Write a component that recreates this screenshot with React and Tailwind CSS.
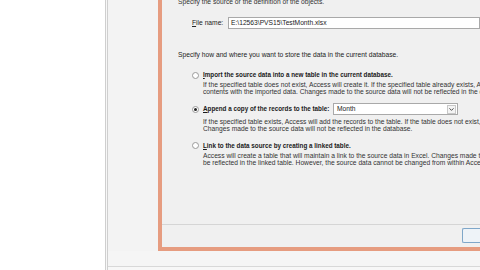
import { ChevronDown } from 'lucide-react';

function Radio({ checked }) {
  return (
    <span className="mt-[1px] flex h-[7px] w-[7px] shrink-0 items-center justify-center rounded-full border border-[#9a9a9a] bg-white">
      {checked ? <span className="h-[3px] w-[3px] rounded-full bg-[#222]" /> : null}
    </span>
  );
}

function Option({ checked, label, under, children, lines, descTop = 'mt-[2px]' }) {
  return (
    <div className="flex flex-col">
      <div className="flex h-[9px] items-center">
        <div className="flex w-[25px] justify-end pr-[4px]">
          <Radio checked={checked} />
        </div>
        <span className="w-[130px] shrink-0 whitespace-nowrap text-[6.3px] font-bold text-[#1a1a1a]">
          <span className="underline">{under}</span>
          {label}
        </span>
        {children}
      </div>
      <div className={`ml-[25px] ${descTop} flex flex-col leading-[7.2px] text-[#333]`}>
        {lines.map((l) => (
          <div key={l} className="whitespace-nowrap">
            {l}
          </div>
        ))}
      </div>
    </div>
  );
}

export default function App() {
  return (
    <div
      className="flex h-[270px] w-[480px] overflow-hidden bg-white text-[6.7px]"
      style={{ fontFamily: '"Liberation Sans", Arial, sans-serif' }}
    >
      <div className="w-[105px] shrink-0 bg-white" />
      <div className="w-[3px] shrink-0 border-x border-[#cfcfcf] bg-[#f7f7f7]" />
      <div className="flex min-w-0 flex-1 flex-col bg-[#f3f3f3]">
        <div className="flex h-[251px] shrink-0">
          <div className="w-[50px] shrink-0" />
          <div className="flex min-w-0 flex-1 flex-col border-b-4 border-l-4 border-[#e69c80] bg-[#f0f0f0]">
            <div className="flex h-[224px] shrink-0 flex-col overflow-hidden pl-[16px]">
              <div className="-mt-[3px] whitespace-nowrap text-[#333]">
                Specify the source or the definition of the objects.
              </div>
              <div className="mt-[10px] flex items-center">
                <span className="ml-[14px] w-[36px] whitespace-nowrap text-[#222]">
                  <span className="underline">F</span>ile name:
                </span>
                <div className="flex h-[12px] flex-1 items-center border border-[#a9a9a9] bg-white pl-[2px] text-[#222]">
                  E:\12563\PVS15\TestMonth.xlsx
                </div>
              </div>
              <div className="mt-[21px] whitespace-nowrap text-[#222]">
                Specify how and where you want to store the data in the current database.
              </div>
              <div className="mt-[10px] flex flex-col gap-[9px]">
                <Option
                  under="I"
                  label="mport the source data into a new table in the current database."
                  lines={[
                    'If the specified table does not exist, Access will create it. If the specified table already exists, Access might overwrite its',
                    'contents with the imported data. Changes made to the source data will not be reflected in the database.',
                  ]}
                />
                <Option
                  checked
                  under="A"
                  label="ppend a copy of the records to the table:"
                  descTop="mt-[4px]"
                  lines={[
                    'If the specified table exists, Access will add the records to the table. If the table does not exist, Access will create it.',
                    'Changes made to the source data will not be reflected in the database.',
                  ]}
                >
                  <div className="flex h-[12px] w-[125px] shrink-0 items-center justify-between border border-[#a9a9a9] bg-white pl-[3px] pr-[1px] font-normal text-[#222]">
                    <span>Month</span>
                    <span className="flex h-[9px] w-[9px] items-center justify-center border border-[#c8c8c8] bg-[#f4f4f4]">
                      <ChevronDown size={7} strokeWidth={3} className="text-[#333]" />
                    </span>
                  </div>
                </Option>
                <Option
                  under="L"
                  label="ink to the data source by creating a linked table."
                  lines={[
                    'Access will create a table that will maintain a link to the source data in Excel. Changes made to the source data in Excel will',
                    'be reflected in the linked table. However, the source data cannot be changed from within Access.',
                  ]}
                />
              </div>
            </div>
            <div className="h-[1px] shrink-0 bg-[#d5d5d5]" />
            <div className="flex flex-1 items-start justify-end bg-[#f0f0f0] pt-[3px]">
              <div className="h-[15px] w-[18px] rounded-l-[2px] border border-r-0 border-[#7fa7c9] bg-[#eef3f8]" />
            </div>
          </div>
        </div>
        <div className="h-[15px] shrink-0 bg-[#f5f5f5]" />
        <div className="h-[1px] shrink-0 bg-[#d8d8d8]" />
        <div className="flex-1 bg-[#f7f7f7]" />
      </div>
    </div>
  );
}
